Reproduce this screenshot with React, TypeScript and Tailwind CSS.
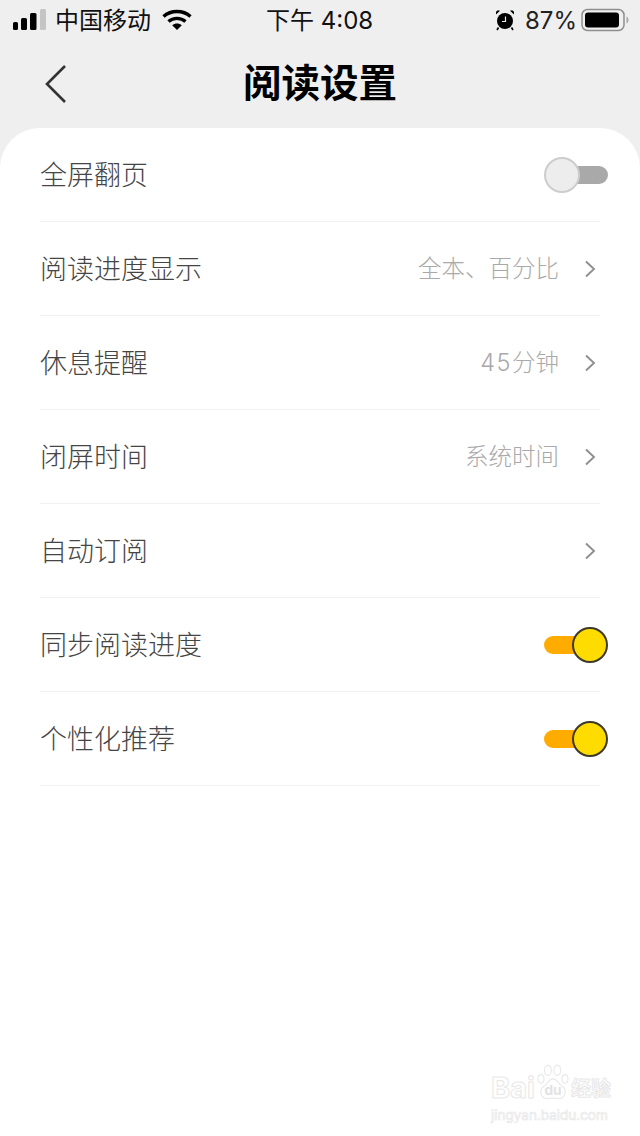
import React from "react";

const cjk = "font-['Inter','Noto_Sans_CJK_SC',sans-serif]";

function Signal() {
  return (
    <svg width="34" height="22" viewBox="0 0 34 22" className="shrink-0">
      <rect x="0" y="13" width="5" height="8" rx="1.5" fill="#000" />
      <rect x="8" y="9" width="6" height="12" rx="1.5" fill="#000" />
      <rect x="17" y="4" width="6.500" height="17" rx="1.5" fill="#000" />
      <rect x="27" y="0" width="6" height="21" rx="1.5" fill="#c4c4c4" />
    </svg>
  );
}

function Wifi() {
  return (
    <svg width="30" height="22" viewBox="0 0 30 22" className="shrink-0">
      <path d="M1.5 7.5C9 .8 21 .8 28.5 7.5" fill="none" stroke="#000" strokeWidth="3.4" />
      <path d="M6.5 12.5c4.8-4.2 12.2-4.2 17 0" fill="none" stroke="#000" strokeWidth="3.4" />
      <path d="M10.2 16.2c2.8-2.4 6.8-2.4 9.6 0L15 21z" fill="#000" />
    </svg>
  );
}

function Alarm() {
  return (
    <svg width="20" height="22" viewBox="0 0 20 22" className="shrink-0">
      <circle cx="10" cy="12" r="8" fill="#000" />
      <path d="M10.5 7.5v5H7" fill="none" stroke="#eee" strokeWidth="1.2" />
      <path d="M1 5.500 5 1.800 2.800 1.200 1 2.800zM19 5.500 15 1.800l2.200-.6L19 2.800z" fill="#000" />
      <path d="M3.500 18.500 2 21M16.500 18.500 18 21" stroke="#000" strokeWidth="1.600" />
    </svg>
  );
}

function Battery() {
  return (
    <svg width="48" height="24" viewBox="0 0 48 24" className="shrink-0">
      <rect x="1" y="1.500" width="42" height="21" rx="5.500" fill="none" stroke="#8e8e8e" strokeWidth="1.500" />
      <rect x="4" y="4.500" width="34" height="15" rx="3" fill="#000" />
      <path d="M45.500 8.500c1.400.6 2 2 2 3.500s-.6 2.900-2 3.500z" fill="#a8a8a8" />
    </svg>
  );
}

function Chevron() {
  return (
    <svg width="12" height="18" viewBox="0 0 12 18" className="shrink-0">
      <path d="M2 1.500 10 9 2 16.500" fill="none" stroke="#8f8f8f" strokeWidth="1.900" />
    </svg>
  );
}

function Toggle({ on }: { on: boolean }) {
  return (
    <div className="relative h-9 w-16 shrink-0">
      <div
        className={
          on
            ? "absolute left-0 top-[9px] h-[18px] w-10 rounded-l-full bg-[#ffab00]"
            : "absolute right-0 top-[9px] h-[18px] w-10 rounded-r-full bg-[#a9a9a9]"
        }
      />
      <div
        className={
          on
            ? "absolute right-0 top-0 h-9 w-9 rounded-full border-2 border-[#3d3a2c] bg-[#ffdc00]"
            : "absolute left-0 top-0 h-9 w-9 rounded-full border-2 border-[#cdcdcd] bg-[#ededed]"
        }
      />
    </div>
  );
}

function Row({ label, value, toggle }: { label: string; value?: React.ReactNode; toggle?: boolean }) {
  const isToggle = toggle !== undefined;
  return (
    <div className="flex h-[94px] items-center justify-between border-b border-[#f1f1f1]">
      <span className="pt-[3px] text-[27px] font-light text-[#454545]">{label}</span>
      {isToggle ? (
        <div className="-mr-2">
          <Toggle on={toggle} />
        </div>
      ) : (
        <div className="flex items-center">
          {value && <span className="mr-[25px] pt-[1px] text-[23.500px] font-light text-[#a9a9a9]">{value}</span>}
          <div className="mr-[4px]">
            <Chevron />
          </div>
        </div>
      )}
    </div>
  );
}

function Watermark() {
  return (
    <div className="absolute left-[491px] top-[1072px] w-[130px] select-none">
      <div className="flex items-end">
        <span className="text-[29px] font-bold leading-[32px] text-white [-webkit-text-stroke:1px_#e8e8e8]">Bai</span>
        <svg width="36" height="40" viewBox="0 0 42 46" className="-mt-2 shrink-0">
          <g fill="#fff" stroke="#e8e8e8" strokeWidth="1.300">
            <ellipse cx="7" cy="17" rx="3.500" ry="5" />
            <ellipse cx="15" cy="7" rx="4" ry="6" />
            <ellipse cx="26" cy="7" rx="4" ry="6" />
            <ellipse cx="35" cy="17" rx="3.500" ry="5" />
            <path d="M21 17c-5 0-6 6-11 9-6 4-3 15 5 14 4-.5 8-1 12 0 8 1 11-10 5-14-5-3-6-9-11-9z" />
          </g>
          <text x="21" y="36" textAnchor="middle" fontSize="16" fontWeight="700" fill="#e2e2e2">du</text>
        </svg>
        <span className="text-[20px] font-bold leading-[30px] text-white [-webkit-text-stroke:1px_#e8e8e8]">经验</span>
      </div>
      <div className="mt-[3px] text-[13.500px] leading-[16px] text-white [-webkit-text-stroke:0.700px_#e8e8e8]">jingyan.baidu.com</div>
    </div>
  );
}

export default function App() {
  return (
    <div className={`relative flex h-[1136px] w-[640px] flex-col overflow-hidden bg-[#efefef] ${cjk}`}>
      <div className="relative flex h-10 items-center justify-between pl-[13px] pr-3 text-black">
        <div className="flex items-center">
          <Signal />
          <span className="ml-[8px] pt-[2px] text-[24px] leading-none text-[#111]">中国移动</span>
          <div className="ml-[11px]">
            <Wifi />
          </div>
        </div>
        <span className="absolute left-[266px] top-[7px] text-[24px] leading-[28px] text-[#111]">下午 4:08</span>
        <div className="flex items-center">
          <Alarm />
          <span className="ml-[10px] pt-[2px] text-[24px] leading-none text-[#222]">87%</span>
          <div className="ml-[4px] mr-[-1px]">
            <Battery />
          </div>
        </div>
      </div>

      <div className="relative flex h-[88px] items-center justify-center pb-[1px]">
        <svg width="24" height="40" viewBox="0 0 24 40" className="absolute left-[44px] top-[24px]">
          <path d="M21 2 3 20 21 38" fill="none" stroke="#333" strokeWidth="2.600" />
        </svg>
        <h1 className="text-[38.500px] font-bold text-black">阅读设置</h1>
      </div>

      <div className="flex-1 rounded-t-[40px] bg-white px-10">
        <Row label="全屏翻页" toggle={false} />
        <Row label="阅读进度显示" value="全本、百分比" />
        <Row label="休息提醒" value={<><span className="tracking-[1.500px]">45</span>分钟</>} />
        <Row label="闭屏时间" value="系统时间" />
        <Row label="自动订阅" value="" />
        <Row label="同步阅读进度" toggle={true} />
        <Row label="个性化推荐" toggle={true} />
      </div>

      <Watermark />
    </div>
  );
}
